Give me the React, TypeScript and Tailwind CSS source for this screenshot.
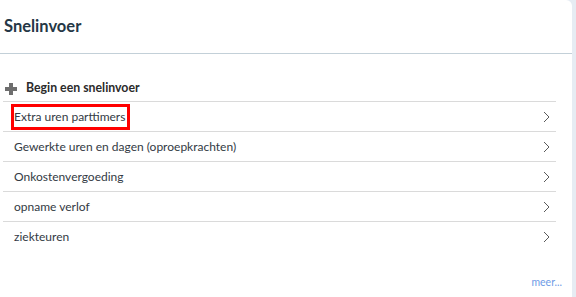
const items = [
  'Extra uren parttimers',
  'Gewerkte uren en dagen (oproepkrachten)',
  'Onkostenvergoeding',
  'opname verlof',
  'ziekteuren',
];

function Chevron() {
  return (
    <svg width="7" height="12" viewBox="0 0 7 12" className="fill-none stroke-[#5a5a5a]">
      <polyline points="1,1 6,6 1,11" strokeWidth="1" />
    </svg>
  );
}

export default function App() {
  return (
    <div className="flex h-[297px] w-[576px] bg-[#e6ecf3] font-['Lato',sans-serif] text-[#2b3138]">
      <div className="flex w-[572px] flex-col rounded-tr-[6px] bg-white">
        {/* Header */}
        <div className="flex h-[54px] items-center border-b border-[#c3d0d8] pl-[4px]">
          <h1 className="text-[16.5px] font-bold text-[#253746]">Snelinvoer</h1>
        </div>

        {/* Quick entry list */}
        <div className="ml-[3px] mr-[16px] mt-[22px]">
          <div className="flex h-[26px] items-center gap-[9px] border-b border-[#dadada] pl-[2px]">
            <svg width="12" height="12" viewBox="0 0 12 12" className="fill-[#6e6e6e]">
              <rect x="4" y="0" width="4" height="12" />
              <rect x="0" y="4" width="12" height="4" />
            </svg>
            <span className="text-[12.3px] font-bold text-[#2b2b2b]">Begin een snelinvoer</span>
          </div>
          {items.map((item, i) => (
            <div
              key={item}
              className={`flex h-[30px] items-center justify-between pl-[11px] pr-[6px] ${i < items.length - 1 ? 'border-b border-[#dadada]' : ''}`}
            >
              <span
                className={`text-[12px] text-[#333a44] ${i === 0 ? '-ml-[3px] border-[3px] border-[#ff0000] py-[1px] pr-[2px]' : ''}`}
              >
                {item}
              </span>
              <Chevron />
            </div>
          ))}
        </div>

        <div className="mt-auto flex justify-end pb-[6px] pr-[10px]">
          <span className="text-[10.5px] text-[#6d9be6]">meer...</span>
        </div>
      </div>
    </div>
  );
}
